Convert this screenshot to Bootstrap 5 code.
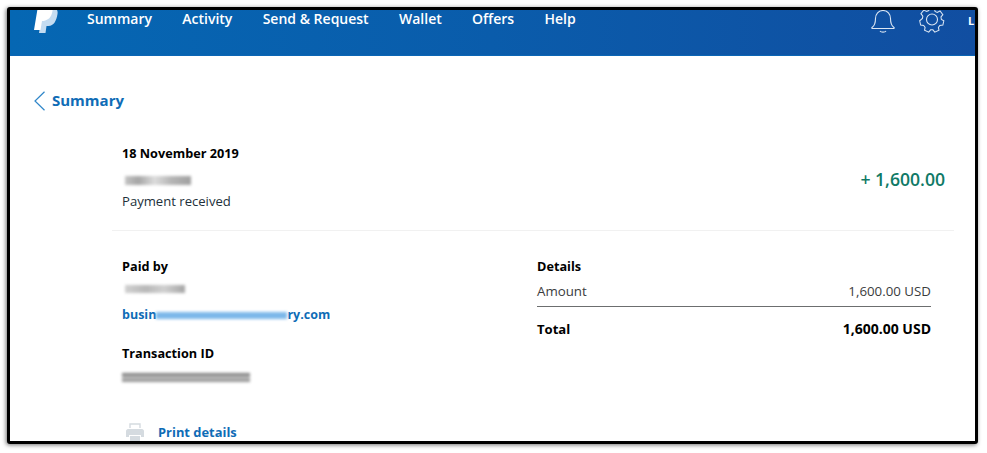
<!DOCTYPE html>
<html lang="en">
<head>
    <meta charset="UTF-8">
    <meta name="viewport" content="width=device-width, initial-scale=1.0">
    <title>Transaction details</title>
    <link rel="stylesheet" href="https://cdn.jsdelivr.net/npm/bootstrap@5.3.0/dist/css/bootstrap.min.css">
    <script src="https://cdn.jsdelivr.net/npm/bootstrap@5.3.0/dist/js/bootstrap.bundle.min.js"></script>
    <style>
        html, body { height: 100%; overflow: hidden; }
        body {
            background: #fff;
            font-family: "Open Sans", "Noto Sans", sans-serif;
            font-size: 13px;
            color: #2c2e2f;
        }
        .shot-frame {
            width: 971px;
            height: 437px;
            margin: 7px 0 0 7px;
            border: 3px solid #000;
            border-radius: 3px;
            overflow: hidden;
            box-shadow: -1px 1px 4px rgba(0, 0, 0, .55);
        }
        .top-bar {
            height: 46px;
            padding-left: 24px;
            background: linear-gradient(90deg, #0567b3 0%, #0a5cab 50%, #114ea1 100%);
            border-bottom: 1px solid #0b66b5;
            overflow: hidden;
        }
        .pp-logo { width: 24px; height: 25px; margin-top: -2px; }
        .top-links { margin-left: 29px; gap: 30.3px; margin-top: -1px; }
        .top-links a {
            color: #fff;
            font-size: 14px;
            font-weight: 600;
            line-height: 19px;
            text-decoration: none;
        }
        .top-icons { margin-left: auto; gap: 24px; margin-top: -3px; }
        .top-initial { color: #fff; font-size: 11px; font-weight: 700; width: 7px; margin-left: -1px; margin-top: 6px; overflow: hidden; }
        .back-row { padding: 35px 0 0 24px; height: 60px; }
        .back-row a, .print-row a, .mail-link {
            color: #0f6cb6;
            font-weight: 700;
            text-decoration: none;
        }
        .back-row a { font-size: 15px; line-height: 20px; margin: -1px 0 0 7px; }
        .tx-head { margin: 25px 21px 0 102px; height: 90px; border-bottom: 1px solid #f1f1f1; padding: 0 9px 0 10px; }
        .tx-head .tx-left { padding-top: 3px; }
        .head-label { color: #000; font-weight: 700; font-size: 12.7px; line-height: 18px; }
        .tx-plain { font-size: 13.1px; line-height: 18px; color: #22303a; }
        .tx-amount { color: #107a66; font-size: 17.6px; font-weight: 600; line-height: 24px; margin-top: 26px; }
        .smudge { filter: blur(1.6px); }
        .smudge-a {
            width: 66px; height: 9px; margin: 14px 0 7px 3px;
            background: linear-gradient(90deg, #c4c4c4 0, #a5a5a5 20%, #dcdcdc 45%, #b5b5b5 70%, #a0a0a0 100%);
        }
        .smudge-b {
            width: 60px; height: 8px; margin: 10px 0 13px 3px;
            background: linear-gradient(90deg, #d0d0d0 0, #b8b8b8 35%, #d0d0d0 65%, #a5a5a5 100%);
        }
        .smudge-c {
            width: 128px; height: 9px; margin: 11px 0 0;
            background: linear-gradient(180deg, #6f6f6f 0, #bdbdbd 50%, #8c8c8c 100%);
        }
        .mail-link { font-size: 12.5px; line-height: 18px; display: flex; align-items: center; }
        .mail-blur { width: 131px; height: 7px; background: #7db8ea; filter: blur(1.6px); }
        .tx-body { margin: 26px 44px 0 112px; }
        .left-col { width: 415px; }
        .right-col { width: 394px; }
        .id-gap { margin-top: 20px; }
        .amount-row { line-height: 18px; font-size: 13.3px; padding: 7px 0 6px; border-bottom: 1px solid #6c6e6f; color: #3a3c3d; }
        .total-row { padding-top: 13px; font-weight: 700; color: #000; font-size: 13.1px; line-height: 18px; }
        .total-sum { font-size: 14px; }
        .print-row { margin-top: 41px; padding-left: 4px; gap: 14px; }
        .print-row a { font-size: 12.9px; line-height: 18px; }
    </style>
</head>
<body>
    <div class="shot-frame bg-white">
        <!-- top navigation -->
        <div class="top-bar d-flex align-items-start">
            <svg class="pp-logo flex-shrink-0" viewBox="0 0 24 25">
                <path fill="#c4dcf1" d="M9 0h10c4 0 5 3 4.500 6-1 7-4 12-9 12h-2l-1 7H5z"/>
                <path fill="#fff" d="M4-2h11c3 0 4 2 3.500 5-1 6-4 9-9 10H8l-1.500 9H0z"/>
            </svg>
            <div class="top-links d-flex">
                <a href="#">Summary</a>
                <a href="#">Activity</a>
                <a href="#">Send &amp; Request</a>
                <a href="#">Wallet</a>
                <a href="#">Offers</a>
                <a href="#">Help</a>
            </div>
            <div class="top-icons d-flex align-items-start">
                <svg width="24" height="26" viewBox="0 0 24 26" fill="none" stroke="#dbe6f3" stroke-width="1.1">
                    <path d="M1 20.500c3-2 3.500-5 3.500-9 0-4.500 3-8 7.500-8s7.500 3.500 7.500 8c0 4 .5 7 3.500 9 .5.500 0 1-.5 1H1.500c-.5 0-1-.5-.5-1z"/>
                    <path d="M9 24c1 1.500 5 1.500 6 0"/>
                </svg>
                <svg width="26" height="26" viewBox="0 0 26 26" fill="none" stroke="#dbe6f3" stroke-width="1.1">
                    <circle cx="13" cy="12.500" r="5.500"/>
                    <path d="M10.500 1h5l.8 3.200 2.200 1 3-1.500 3 3.800-2 2.500.4 2.500 2.600 1.500-1 4.500-3.200.4-1.500 2 .6 3.100-4.400 2-2-2.500h-2.400l-2 2.500-4.400-2 .6-3.100-1.500-2-3.200-.4-1-4.500L3 11.500l.4-2.500-2-2.500 3-3.800 3 1.500 2.200-1z" transform="translate(.6 .5) scale(.95)"/>
                </svg>
                <span class="top-initial">L</span>
            </div>
        </div>

        <!-- back link -->
        <div class="back-row d-flex align-items-start">
            <svg width="11" height="20" viewBox="0 0 11 20" fill="none" stroke="#2f86c9" stroke-width="1.2">
                <path d="M10.500 .8 1 10l9.500 9.200"/>
            </svg>
            <a href="#">Summary</a>
        </div>

        <!-- transaction header -->
        <div class="tx-head d-flex justify-content-between">
            <div class="tx-left">
                <div class="head-label">18 November 2019</div>
                <div class="smudge smudge-a"></div>
                <div class="tx-plain">Payment received</div>
            </div>
            <div class="tx-amount">+ 1,600.00</div>
        </div>

        <!-- paid by / details -->
        <div class="tx-body d-flex">
            <div class="left-col">
                <div class="head-label">Paid by</div>
                <div class="smudge smudge-b"></div>
                <a class="mail-link" href="#">busin<span class="mail-blur"></span>ry.com</a>
                <div class="head-label id-gap">Transaction ID</div>
                <div class="smudge smudge-c"></div>
                <div class="print-row d-flex align-items-center">
                    <svg width="18" height="18" viewBox="0 0 18 18">
                        <path fill="none" stroke="#d5dbe0" stroke-width="1.4" d="M4 5V1h10v4"/>
                        <path fill="#d5dbe0" d="M2 6h14c1 0 2 1 2 2v6h-3v-2H3v2H0V8c0-1 1-2 2-2z"/>
                        <path fill="#d5dbe0" d="M4 13h10v5H4z"/>
                    </svg>
                    <a href="#">Print details</a>
                </div>
            </div>
            <div class="right-col">
                <div class="head-label">Details</div>
                <div class="amount-row d-flex justify-content-between">
                    <span>Amount</span><span>1,600.00 USD</span>
                </div>
                <div class="total-row d-flex justify-content-between">
                    <span>Total</span><span class="total-sum">1,600.00 USD</span>
                </div>
            </div>
        </div>
    </div>
</body>
</html>
